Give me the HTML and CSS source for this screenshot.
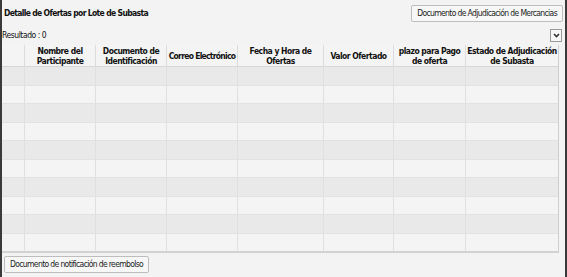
FILE: index.html
```html
<!DOCTYPE html>
<html>
<head>
  <title>Detalle de Ofertas</title>
  <link rel="stylesheet" href="styles.css">
</head>
<body>
  <div class="panel">
    <div class="top">
      <h2>Detalle de Ofertas por Lote de Subasta</h2>
      <button class="btn">Documento de Adjudicación de Mercancias</button>
    </div>
    <div class="result-bar">
      <span>Resultado : 0</span>
      <button class="drop">
        <svg width="7" height="5" viewBox="0 0 7 5"><path d="M1 1 L3.5 3.5 L6 1" fill="none" stroke="#333" stroke-width="1.6"/></svg>
      </button>
    </div>
    <div class="grid-wrap">
      <table class="grid">
        <colgroup>
          <col class="c-sel">
          <col class="c-71">
          <col class="c-71">
          <col class="c-71">
          <col class="c-86">
          <col class="c-70">
          <col class="c-72">
          <col>
        </colgroup>
        <thead>
          <tr>
            <th></th>
            <th>Nombre del<br>Participante</th>
            <th>Documento de<br>Identificación</th>
            <th class="tight">Correo Electrónico</th>
            <th>Fecha y Hora de<br>Ofertas</th>
            <th>Valor Ofertado</th>
            <th>plazo para Pago<br>de oferta</th>
            <th>Estado de Adjudicación<br>de Subasta</th>
          </tr>
        </thead>
        <tbody id="rows"></tbody>
      </table>
    </div>
    <div class="bottom">
      <button class="btn">Documento de notificación de reembolso</button>
    </div>
  </div>

  <script>
    // empty rows of the grid
    const tbody = document.getElementById('rows');
    for (let i = 0; i < 10; i++) {
      const tr = document.createElement('tr');
      for (let j = 0; j < 8; j++) tr.appendChild(document.createElement('td'));
      tbody.appendChild(tr);
    }
  </script>
</body>
</html>
```

FILE: styles.css
```css
body {
  margin: 0;
  background: #f3f3f3;
  font-family: "DejaVu Sans Condensed", "DejaVu Sans", sans-serif;
  font-size: 8.5px;
  letter-spacing: -0.45px;
  color: #111;
}
.panel {
  box-sizing: border-box;
  width: 567px;
  height: 277px;
  border-left: 2px solid #3a3a3a;
  border-right: 2px solid #3a3a3a;
  padding: 0 2px 0 0;
  display: flex;
  flex-direction: column;
}
.top {
  display: flex;
  justify-content: space-between;
  align-items: center;
  height: 24px;
  padding-top: 1px;
}
h2 {
  margin: 0 0 0 2px;
  font-size: 8.5px;
  letter-spacing: -0.65px;
  font-weight: bold;
}
.btn {
  font-family: inherit;
  font-size: 8.5px;
  letter-spacing: -0.64px;
  background: #f7f7f7;
  border: 1px solid #bdbdbd;
  border-radius: 2px;
  padding: 1px 5px 2px;
  height: 17px;
  color: #222;
}
.result-bar {
  display: flex;
  justify-content: space-between;
  align-items: center;
  height: 20px;
}
.drop {
  width: 12px;
  height: 13px;
  padding: 0;
  border: 1px solid #9a9a9a;
  background: #f7f7f7;
  display: flex;
  align-items: center;
  justify-content: center;
  margin-right: 1px;
}
.grid-wrap {
  width: 556px;
  height: 206px;
  border-right: 1px solid #cfcfcf;
  border-bottom: 2px solid #d2d2d2;
  overflow: hidden;
}
.grid {
  border-collapse: separate;
  border-spacing: 0;
  table-layout: fixed;
  width: 556px;
}
.c-sel { width: 22px; }
.c-71 { width: 71px; }
.c-86 { width: 86px; }
.c-70 { width: 70px; }
.c-72 { width: 72px; }
.grid th {
  box-sizing: border-box;
  height: 22px;
  font-size: 8.5px;
  letter-spacing: -0.5px;
  font-weight: bold;
  line-height: 10px;
  text-align: center;
  padding: 0;
  border-left: 1px solid #dcdcdc;
  border-bottom: 1px solid #d6d6d6;
  background: #f4f4f4;
  white-space: nowrap;
  overflow: hidden;
}
.grid th.tight {
  letter-spacing: -0.72px;
}
.grid th:first-child,
.grid td:first-child {
  border-left: none;
}
.grid td {
  box-sizing: border-box;
  height: 18.5px;
  padding: 0;
  border-left: 1px solid #e0e0e0;
  border-bottom: 1px solid #e2e2e2;
  background: #f4f4f4;
}
.grid tbody tr:nth-child(odd) td {
  background: #e9e9e9;
}
.bottom {
  padding: 3px 0 0 2px;
}
```
